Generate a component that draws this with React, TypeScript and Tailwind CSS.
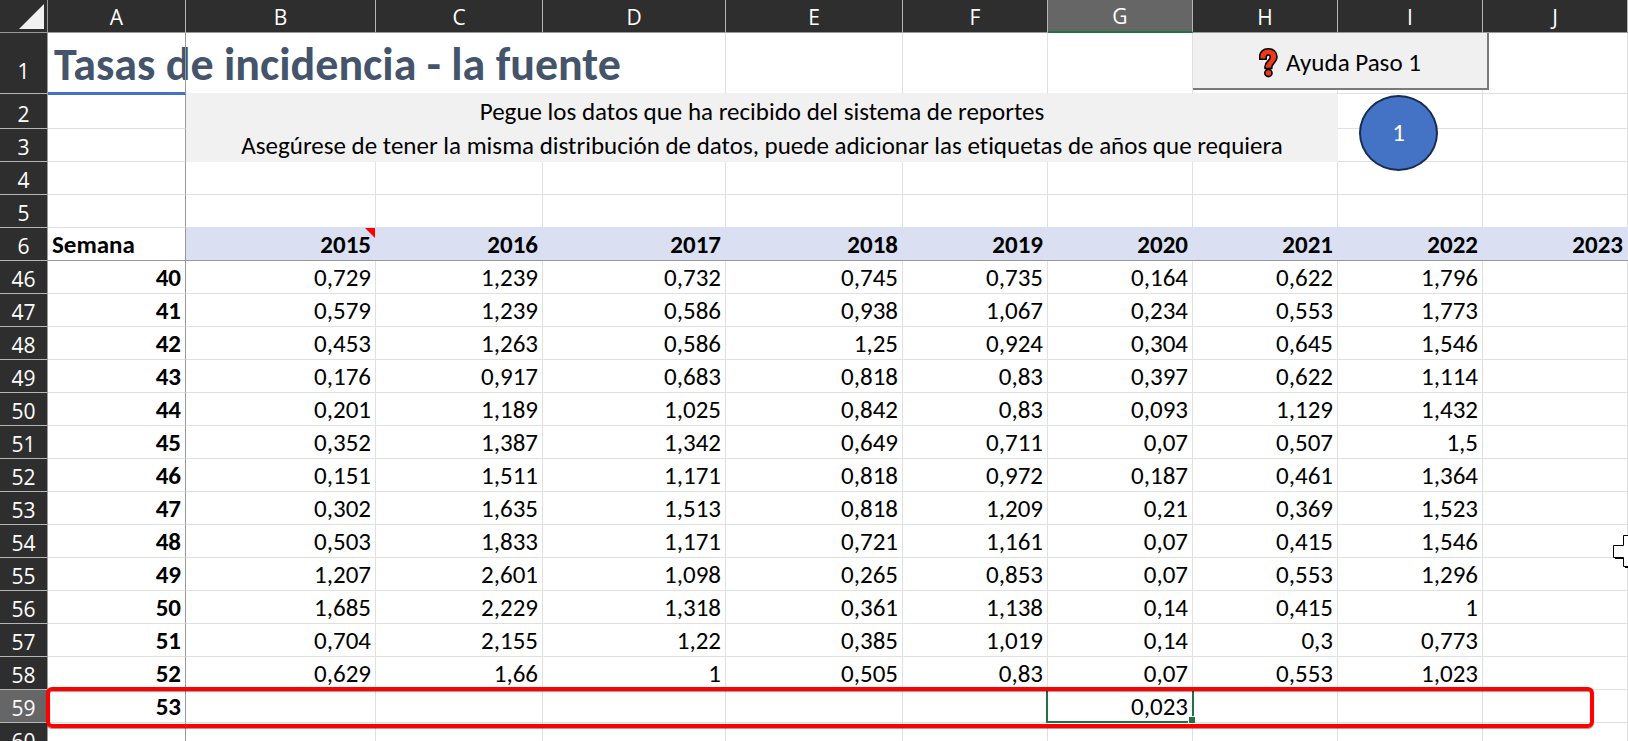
import clsx from "clsx";

const COLUMNS = ["A", "B", "C", "D", "E", "F", "G", "H", "I", "J"];
const YEARS = ["2015", "2016", "2017", "2018", "2019", "2020", "2021", "2022", "2023"];

const WEEKS = [
	{ row: 46, week: 40, rates: ["0,729", "1,239", "0,732", "0,745", "0,735", "0,164", "0,622", "1,796", ""] },
	{ row: 47, week: 41, rates: ["0,579", "1,239", "0,586", "0,938", "1,067", "0,234", "0,553", "1,773", ""] },
	{ row: 48, week: 42, rates: ["0,453", "1,263", "0,586", "1,25", "0,924", "0,304", "0,645", "1,546", ""] },
	{ row: 49, week: 43, rates: ["0,176", "0,917", "0,683", "0,818", "0,83", "0,397", "0,622", "1,114", ""] },
	{ row: 50, week: 44, rates: ["0,201", "1,189", "1,025", "0,842", "0,83", "0,093", "1,129", "1,432", ""] },
	{ row: 51, week: 45, rates: ["0,352", "1,387", "1,342", "0,649", "0,711", "0,07", "0,507", "1,5", ""] },
	{ row: 52, week: 46, rates: ["0,151", "1,511", "1,171", "0,818", "0,972", "0,187", "0,461", "1,364", ""] },
	{ row: 53, week: 47, rates: ["0,302", "1,635", "1,513", "0,818", "1,209", "0,21", "0,369", "1,523", ""] },
	{ row: 54, week: 48, rates: ["0,503", "1,833", "1,171", "0,721", "1,161", "0,07", "0,415", "1,546", ""] },
	{ row: 55, week: 49, rates: ["1,207", "2,601", "1,098", "0,265", "0,853", "0,07", "0,553", "1,296", ""] },
	{ row: 56, week: 50, rates: ["1,685", "2,229", "1,318", "0,361", "1,138", "0,14", "0,415", "1", ""] },
	{ row: 57, week: 51, rates: ["0,704", "2,155", "1,22", "0,385", "1,019", "0,14", "0,3", "0,773", ""] },
	{ row: 58, week: 52, rates: ["0,629", "1,66", "1", "0,505", "0,83", "0,07", "0,553", "1,023", ""] },
	{ row: 59, week: 53, rates: ["", "", "", "", "", "0,023", "", "", ""] },
	{ row: 60, week: null, rates: ["", "", "", "", "", "", "", "", ""] },
];

const SELECTED_ROW = 59;
const SELECTED_COLUMN = "G";
const POINTER_ROW = 54;

const cell = "border-r border-b border-[#e0e0e0]";
const frozen = "border-r border-b border-r-[#999999] border-b-[#e0e0e0]";
const value = "pt-0.5 pr-1 text-right";

function RowHeader({ n, tall }: { n: number; tall?: boolean }) {
	return (
		<th
			scope="row"
			className={clsx(
				"border-r border-b border-r-[#999999] border-b-[#b5b5b5] pt-1 align-bottom font-['Open_Sans',sans-serif] text-[21px] leading-7 font-normal text-white",
				n === SELECTED_ROW ? "bg-[#666666]" : "bg-[#2e2e2e]",
				tall && "pb-2",
			)}
		>
			{n}
		</th>
	);
}

function EmptyCells({ count, className }: { count: number; className?: string }) {
	return (
		<>
			{Array.from({ length: count }, (_, i) => (
				<td key={i} className={clsx(cell, className)} />
			))}
		</>
	);
}

function QuestionIcon() {
	return (
		<svg width="19" height="30" viewBox="0 0 19 30" aria-hidden="true">
			<path d="M.7 11.300V8.500C.7 3.500 4.300 .8 9.300 .8S18 4 18 9C18 14.500 12.800 15 12.800 19.500V20.500H6V18.500C6 13.500 11.200 12.500 11.200 9.200C11.200 7.600 10.400 7 9.300 7S7.200 7.800 7.200 9.300V11.300Z" fill="#f03a17" stroke="#000" strokeWidth="1.600" strokeLinejoin="round" />
			<circle cx="9.400" cy="25" r="3.600" fill="#f03a17" stroke="#000" strokeWidth="1.600" />
		</svg>
	);
}

// Excel's cell pointer, cut off by the window edge
function CellPointer() {
	return (
		<svg className="absolute top-2.5 right-0 z-10" width="15" height="34" viewBox="0 0 15 34" aria-hidden="true">
			<path d="M16 .5H10.500V10.500H.5V22.500H10.500V31.500H16" fill="#fff" stroke="#000" />
			<path d="M2 23.500H10.500M12 32.500H15" fill="none" stroke="#000" />
		</svg>
	);
}

export default function App() {
	return (
		<main className="h-screen overflow-hidden bg-white font-[Calibri,Carlito,Lato,sans-serif] text-[25px] leading-[30px] text-black [font-variant-ligatures:none]">
			<table className="w-full table-fixed border-separate border-spacing-0">
				<colgroup>
					<col className="w-[48px]" />
					<col className="w-[138px]" />
					<col className="w-[190px]" />
					<col className="w-[167px]" />
					<col className="w-[183px]" />
					<col className="w-[177px]" />
					<col className="w-[145px]" />
					<col className="w-[145px]" />
					<col className="w-[145px]" />
					<col className="w-[145px]" />
					<col className="w-[145px]" />
				</colgroup>
				<thead>
					<tr className="h-[33px] bg-[#2e2e2e] font-['Open_Sans',sans-serif] text-[21px] text-white">
						<td className="border-r border-b border-[#999999]">
							<svg className="ml-auto mr-[3px]" width="25" height="25" viewBox="0 0 25 25" aria-hidden="true">
								<path d="M25 0V25H0Z" fill="#f1f1f1" />
							</svg>
						</td>
						{COLUMNS.map((name) => (
							<th
								key={name}
								scope="col"
								className={clsx(
									"border-r border-r-[#b5b5b5] font-normal",
									name === SELECTED_COLUMN
										? "border-b-2 border-b-[#217346] bg-[#666666] pt-px"
										: "border-b border-b-[#999999] pt-0.5",
								)}
							>
								{name}
							</th>
						))}
					</tr>
				</thead>
				<tbody>
					<tr className="h-[61px]">
						<RowHeader n={1} tall />
						<td className="relative after:absolute after:top-0 after:right-0 after:h-full after:w-px after:bg-[#999999]">
							<h1 className="pl-1.5 text-[46px] leading-[60px] font-bold whitespace-nowrap text-[#44546a]">
								Tasas de incidencia - la fuente
							</h1>
							<span className="absolute -bottom-px left-0 h-[3px] w-full bg-[#4472c4]" />
						</td>
						<td className="border-b border-[#f1f1f1]" />
						<td className="border-b border-[#f1f1f1]" />
						<EmptyCells count={4} className="border-b-[#f1f1f1]" />
						<td className={clsx(cell, "relative border-b-[#f1f1f1] align-top")}>
							<button
								type="button"
								className="absolute top-0 left-0 z-10 flex h-[57px] w-[296px] items-center justify-center gap-2 border-r-2 border-b-2 border-[#7a7a7a] bg-[#f0f0f0] pt-1 whitespace-nowrap"
							>
								<QuestionIcon />
								Ayuda Paso 1
							</button>
						</td>
						<EmptyCells count={2} />
					</tr>
					<tr className="h-[35px]">
						<RowHeader n={2} />
						<td className={frozen} />
						<td colSpan={7} className="bg-[#f1f1f1] text-center align-middle">
							Pegue los datos que ha recibido del sistema de reportes
						</td>
						<td className={clsx(cell, "relative")}>
							<span className="absolute top-px left-[21px] z-10 flex h-[76px] w-[79px] items-center justify-center rounded-[50%] border-2 border-[#172c51] bg-[#4472c4] text-white">
								1
							</span>
						</td>
						<EmptyCells count={1} />
					</tr>
					<tr className="h-[33px]">
						<RowHeader n={3} />
						<td className={frozen} />
						<td colSpan={7} className="bg-[#f1f1f1] text-center">
							Asegúrese de tener la misma distribución de datos, puede adicionar las etiquetas de años que requiera
						</td>
						<EmptyCells count={2} />
					</tr>
					<tr className="h-[33px]">
						<RowHeader n={4} />
						<td className={frozen} />
						<EmptyCells count={9} />
					</tr>
					<tr className="h-[33px]">
						<RowHeader n={5} />
						<td className={frozen} />
						<EmptyCells count={9} className="border-b-[#dae0f2]" />
					</tr>
					<tr className="h-[33px] font-bold">
						<RowHeader n={6} />
						<th scope="col" className="border-r border-b border-[#999999] pt-0.5 pl-1 text-left">
							Semana
						</th>
						{YEARS.map((year, i) => (
							<th key={year} scope="col" className="relative border-b border-[#999999] bg-[#dae0f2] pt-0.5 pr-[5px] text-right">
								{year}
								{i === 0 && (
									<svg className="absolute top-0 right-px" width="10" height="10" viewBox="0 0 10 10" aria-hidden="true">
										<path d="M0 0H10V10Z" fill="#f00" />
									</svg>
								)}
							</th>
						))}
					</tr>
					{WEEKS.map(({ row, week, rates }) => (
						<tr key={row} className="relative h-[33px]">
							<RowHeader n={row} />
							<th scope="row" className={clsx(frozen, value)}>
								{week}
								{row === SELECTED_ROW && (
									<span className="pointer-events-none absolute -top-[3px] right-[34px] -bottom-[5px] left-[46px] z-20 rounded-md border-4 border-[#f00] shadow-[0_1px_1px_#0006,inset_0_1px_1px_#0006]" />
								)}
							</th>
							{rates.map((rate, i) => {
								const selected = row === SELECTED_ROW && COLUMNS[i + 1] === SELECTED_COLUMN;
								return (
									<td key={i} className={clsx(cell, value, selected && "relative")}>
										{rate}
										{selected && (
											<>
												<span className="absolute -top-0.5 -right-0.5 -bottom-px -left-0.5 z-10 border-2 border-[#217346]" />
												<span className="absolute -right-[3px] -bottom-px z-10 size-[7px] border-t border-l border-white bg-[#217346]" />
											</>
										)}
										{row === POINTER_ROW && i === rates.length - 1 && <CellPointer />}
									</td>
								);
							})}
						</tr>
					))}
				</tbody>
			</table>
		</main>
	);
}
